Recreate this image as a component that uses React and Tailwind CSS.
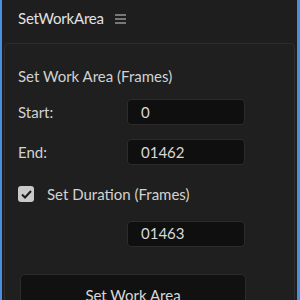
import React, { useState } from 'react'

function Field({ label, value }) {
  return (
    <div className="flex items-center h-[26px]">
      <span className="w-[109px] text-[15px] text-[#d2d2d2]">{label}</span>
      <div className="w-[118px] h-[26px] flex items-center pl-[13px] bg-[#0f0f0f] border border-[#2c2c2c] rounded-[4px] text-[15px] text-[#d8d8d8]">
        {value}
      </div>
    </div>
  )
}

export default function App() {
  const [checked, setChecked] = useState(true)

  return (
    <div className="w-[300px] h-[300px] overflow-hidden bg-[#1e1e1e] flex font-['Lato',sans-serif]">
      <div className="w-[2px] shrink-0 bg-[#4b8ee0]" />
      <div className="flex-1 flex flex-col min-w-0">
        <div className="h-[43px] shrink-0 flex items-center gap-[11px] pl-[16px] pb-[6px]">
          <span className="text-[15px] tracking-[-0.2px] text-[#e2e2e2] leading-none">SetWorkArea</span>
          <svg width="12" height="10" viewBox="0 0 12 10" className="text-[#cfcfcf]">
            <path d="M0 1h11M0 5h11M0 9h11" stroke="currentColor" strokeWidth="1.2" />
          </svg>
        </div>
        <div className="flex-1 min-h-0 overflow-hidden mx-[2px] border-t border-x border-[#2e2e2e] rounded-t-[5px] bg-[#1f1f1f] pl-[13px] flex flex-col">
          <div className="mt-[25px] shrink-0 text-[15px] text-[#d2d2d2] leading-none">Set Work Area (Frames)</div>
          <div className="mt-[15px] shrink-0 flex flex-col gap-[14px]">
            <Field label="Start:" value="0" />
            <Field label="End:" value="01462" />
          </div>
          <label className="mt-[18px] shrink-0 flex items-center gap-[13px] cursor-pointer">
            <input type="checkbox" checked={checked} onChange={e => setChecked(e.target.checked)} className="hidden" />
            <span className="w-[16px] h-[16px] rounded-[3px] bg-[#c9c9c9] flex items-center justify-center">
              {checked && (
                <svg width="11" height="9" viewBox="0 0 11 9">
                  <path d="M1 4.5l3 3L10 1" fill="none" stroke="#1b1b1b" strokeWidth="2" />
                </svg>
              )}
            </span>
            <span className="text-[15px] text-[#d2d2d2]">Set Duration (Frames)</span>
          </label>
          <div className="mt-[15px] shrink-0 flex">
            <div className="ml-[109px] w-[118px] h-[26px] flex items-center pl-[13px] bg-[#0f0f0f] border border-[#2c2c2c] rounded-[4px] text-[15px] text-[#d8d8d8]">
              01463
            </div>
          </div>
          <button className="mt-[27px] shrink-0 ml-[2px] w-[226px] h-[40px] bg-[#111111] border border-[#2c2c2c] rounded-[5px] text-[15px] text-[#d8d8d8] pt-[9px] flex justify-center items-start">
            Set Work Area
          </button>
        </div>
      </div>
      <div className="w-[3px] shrink-0 bg-[#4b8ee0]" />
    </div>
  )
}
